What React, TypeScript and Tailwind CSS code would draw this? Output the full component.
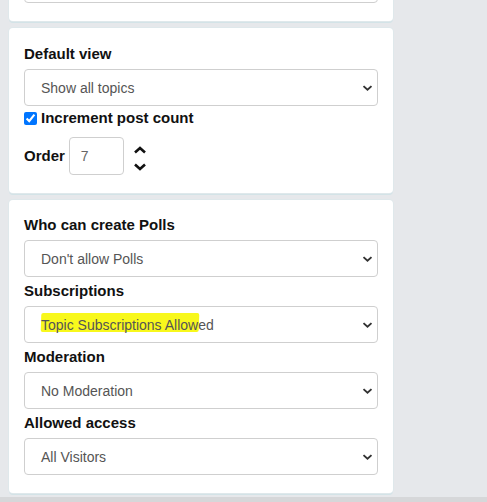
import React from 'react';

// Shared styles
const card =
  'w-[384px] bg-white rounded-[4px] shadow-[0_0_0_1px_#dfe8eb,0_2px_0_0_#d3e3e7] px-[15px]';
const label = 'text-[15px] leading-[20px] font-bold text-[#111]';
const selectBox =
  'relative flex items-center h-[37px] w-[354px] border border-[#cfcfcf] rounded-[4px] bg-white pl-[16px] pt-[1px] text-[14px] text-[#555]';

const Chevron: React.FC = () => (
  <svg
    className="absolute right-[4px] top-1/2 -translate-y-1/2"
    width="11"
    height="7"
    viewBox="0 0 11 7"
  >
    <path d="M1.5 1.6 5.5 5.2 9.5 1.6" fill="none" stroke="#333" strokeWidth="1.9" />
  </svg>
);

const FakeSelect: React.FC<{ children: React.ReactNode }> = ({ children }) => (
  <div className={selectBox}>
    {children}
    <Chevron />
  </div>
);

const Field: React.FC<{ title: string; children: React.ReactNode; first?: boolean }> = ({
  title,
  children,
  first,
}) => (
  <div className={first ? '' : 'mt-[4px]'}>
    <div className={label + ' mb-[5px]'}>{title}</div>
    {children}
  </div>
);

const App: React.FC = () => {
  return (
    <div className="min-h-[502px] h-[502px] overflow-hidden bg-[#e6e8eb] font-['Liberation_Sans',Arial,sans-serif]">
      <div className="flex flex-col gap-[7px] pl-[9px]">
        {/* Card oben (abgeschnitten) */}
        <div className={card + ' mt-[-72px] pt-[15px] pb-[18px]'}>
          <div className="relative h-[60px] w-[354px] border border-[#cfcfcf] rounded-[4px]">
            <svg
              className="absolute right-[2px] bottom-[2px]"
              width="8"
              height="8"
              viewBox="0 0 8 8"
            >
              <path d="M7 2 2 7M7 5 5 7" stroke="#999" strokeWidth="1" />
            </svg>
          </div>
        </div>

        {/* Default view */}
        <div className={card + ' pt-[16px] pb-[18px]'}>
          <Field title="Default view" first>
            <FakeSelect>Show all topics</FakeSelect>
          </Field>
          <label className="mt-[2px] flex items-center h-[20px] gap-[4px]">
            <input
              type="checkbox"
              defaultChecked
              className="m-0 w-[13px] h-[13px] accent-[#0075ff]"
            />
            <span className={label}>Increment post count</span>
          </label>
          <div className="mt-[9px] flex items-center">
            <span className={label + ' mr-[4px]'}>Order</span>
            <div className="flex items-center h-[38px] w-[55px] border border-[#cfcfcf] rounded-[4px] pl-[11px] text-[14px] text-[#666]">
              7
            </div>
            <div className="ml-[9px] flex flex-col gap-[9px] pt-[5px]">
              <svg width="14" height="8" viewBox="0 0 14 8">
                <path d="M2 6.5 7 2l5 4.5" fill="none" stroke="#111" strokeWidth="2.6" />
              </svg>
              <svg width="14" height="8" viewBox="0 0 14 8">
                <path d="M2 1.5 7 6l5-4.5" fill="none" stroke="#111" strokeWidth="2.6" />
              </svg>
            </div>
          </div>
        </div>

        {/* Polls, Abos, Moderation */}
        <div className={card + ' pt-[15px] pb-[18px]'}>
          <Field title="Who can create Polls" first>
            <FakeSelect>Don't allow Polls</FakeSelect>
          </Field>
          <Field title="Subscriptions">
            <FakeSelect>
              <span className="relative">
                <span className="absolute left-[0px] top-[-2px] h-[19px] w-[158px] bg-[#f8f81c] rounded-[2px] -skew-x-2" />
                <span className="relative">Topic Subscriptions Allowed</span>
              </span>
            </FakeSelect>
          </Field>
          <Field title="Moderation">
            <FakeSelect>No Moderation</FakeSelect>
          </Field>
          <Field title="Allowed access">
            <FakeSelect>All Visitors</FakeSelect>
          </Field>
        </div>
      </div>
      <div className="mt-[4px] h-[10px] bg-[#d6d7d9]" />
    </div>
  );
};

export default App;
